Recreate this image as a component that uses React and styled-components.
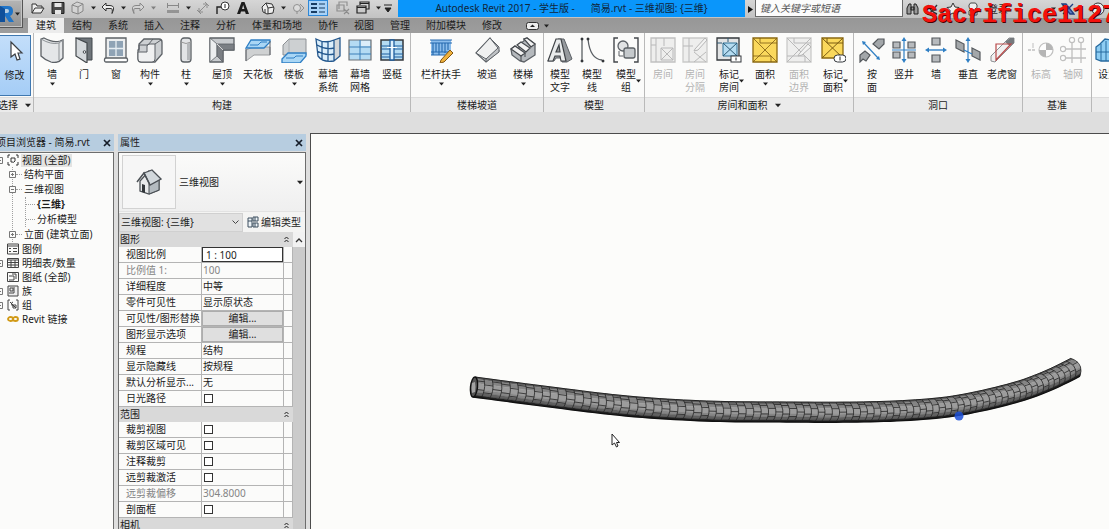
import styled, { createGlobalStyle } from "styled-components";

const GlobalStyle = createGlobalStyle`
    * {
        box-sizing: border-box;
    }

    body {
        margin: 0;
        overflow: hidden;
        background: #dedede;
    }

    body, button, input, select, table {
        font-family: "Noto Sans", "Noto Sans CJK SC", sans-serif;
        font-size: 10px;
        line-height: 13px;
        color: #1c1c1c;
    }

    button {
        border: 0;
        padding: 0;
        background: none;
    }

    svg {
        display: block;
        flex-shrink: 0;
    }

    ul {
        list-style: none;
        margin: 0;
        padding: 0;
    }
`

const Shell = styled.div`
    display: flex;
    flex-direction: column;
    height: 100vh;
    margin-left: -4px;
    overflow: hidden;
    white-space: nowrap;
`

/* ---------- title bar and tabs ---------- */

const TopBar = styled.header`
    position: relative;
    display: grid;
    grid-template-columns: 32px 1fr;
    background: linear-gradient(#d6d6d6, #c2c2c2 18px, #979797 18px, #9d9d9d);
`

const AppButton = styled.button`
    grid-row: span 2;
    display: flex;
    align-items: center;
    justify-content: flex-end;
    gap: 1px;
    height: 28px;
    width: 27px;
    padding-right: 2px;
    border: 1px solid #555;
    border-top: 0;
    background: linear-gradient(#b5b5b5, #8f8f8f);
    box-shadow: inset 0 0 0 1px #c4c4c4;
`

const QuickBar = styled.div`
    display: flex;
    align-items: stretch;
    height: 18px;
`

const QuickButton = styled.button`
    display: flex;
    align-items: center;
    justify-content: center;
    width: ${props => props.$narrow ? 10 : 20}px;
    height: 16px;
    flex-shrink: 0;
    opacity: ${props => props.disabled ? .45 : 1};
    ${props => props.$on && `
        background: #a9d2f7;
        box-shadow: inset 0 0 0 1px #2e88d8;
    `}
`

const QuickGap = styled.span`
    width: 5px;
    flex-shrink: 0;
`

const WindowTitle = styled.h1`
    flex: 1;
    display: flex;
    justify-content: center;
    gap: 16px;
    height: 17px;
    margin: 0;
    background: #0a96fb;
    color: #10263c;
    font-size: 10px;
    font-weight: normal;
    line-height: 16px;
`

const SearchArea = styled.div`
    display: flex;
    align-items: center;
    width: 364px;
    overflow: hidden;
`

const SearchInput = styled.input`
    width: 148px;
    height: 17px;
    margin-bottom: 2px;
    padding: 0 4px;
    border: 1px solid #6a6a6a;
    border-top: 0;
    background: #fcfcfc;

    &::placeholder {
        color: #555;
        font-style: italic;
    }
`

const SignIn = styled.a`
    width: 60px;
    color: #2c2c2c;
    text-decoration: none;
`

const Tabs = styled.nav`
    display: flex;
    align-items: stretch;
    height: 15px;
`

const Tab = styled.button`
    padding: 0 8px;
    line-height: 15px;
    background: ${props => props.$active ? "#ececec" : "none"};
`

const TabToggle = styled.button`
    display: flex;
    align-items: center;
    gap: 5px;
    margin-left: 16px;
`

const Watermark = styled.span`
    position: absolute;
    top: 0;
    right: -8px;
    color: #f5100c;
    font-family: "Liberation Mono", monospace;
    font-size: 25px;
    font-weight: bold;
    line-height: 32px;
    text-shadow: 1px 1px 0 #4a0000;
    pointer-events: none;
`

/* ---------- ribbon ---------- */

const Ribbon = styled.div`
    display: flex;
    height: 79px;
    background: #fbfbfa;
    margin-bottom: 21px;
`

const Panel = styled.section`
    display: flex;
    flex-direction: column;
    flex: ${props => props.$grow ? "1 0 auto" : "none"};
    border-right: 1px solid #b9b9b9;
`

const PanelTools = styled.div`
    display: flex;
    flex: 1;
    padding: 0 ${props => props.$tight ? 0 : 2}px;
`

const PanelName = styled.h2`
    display: flex;
    align-items: center;
    justify-content: center;
    gap: 7px;
    height: 15px;
    margin: 0;
    border-top: 1px solid #dcdcdc;
    background: #ebebeb;
    font-size: 10px;
    font-weight: normal;
`

const Tool = styled.button`
    display: flex;
    flex-direction: column;
    align-items: center;
    width: ${props => props.$width || 32}px;
    padding-top: 4px;
    color: ${props => props.disabled ? "#b3b3b3" : "#1c1c1c"};

    > svg:first-child {
        opacity: ${props => props.disabled ? .6 : 1};
    }
`

const ToolLabel = styled.span`
    display: grid;
    grid-template-columns: ${props => props.$side ? "6px auto 6px" : "auto"};
    align-items: center;
    margin: 5px 0 1px;
    white-space: pre;
`

const ModifyTool = styled(Tool)`
    height: 61px;
    width: 33px;
    margin-top: 2px;
    padding-top: 2px;
    border: 1px solid #3f78b0;
    background: linear-gradient(#c3defa, #a5cdf6);
`

/* ---------- docked palettes ---------- */

const Workspace = styled.main`
    display: flex;
    flex: 1;
    min-height: 0;
    gap: 4px;
`

const Palette = styled.aside`
    display: flex;
    flex-direction: column;
    flex-shrink: 0;
    width: ${props => props.$width}px;
    min-height: 0;
    padding-top: 1px;
`

const PaletteHeader = styled.header`
    display: flex;
    align-items: center;
    justify-content: space-between;
    height: 17px;
    margin-bottom: 1px;
    padding: 0 3px 0 ${props => props.$flush ? 0 : 2}px;
    background: #b7cde0;
`

const PaletteBody = styled.div`
    flex: 1;
    min-height: 0;
    overflow: hidden;
    border: solid #6d6d6d;
    border-width: 1px 1px 0 ${props => props.$boxed ? 1 : 0}px;
    background: #fbfbfa;
`

const Branch = styled.ul`
    margin-left: 16px;
    border-left: 1px dotted #a0a0a0;
`

const Leaves = styled.ul`
    margin-left: 12px;
    border-left: 1px dotted #a0a0a0;
`

const TreeRow = styled.div`
    display: flex;
    align-items: center;
    height: ${props => props.$nested ? 15 : 14}px;
    font-weight: ${props => props.$bold ? "bold" : "normal"};
`

const Expander = styled.button`
    display: flex;
    flex-shrink: 0;
    width: 7px;
    height: 7px;
    margin-left: ${props => props.$nested ? -4 : 0}px;
    margin-right: ${props => props.$nested ? 0 : 4}px;
    background: #fbfbfa;
`

const Dash = styled.span`
    width: ${props => props.$long ? 9 : 6}px;
    margin-right: 1px;
    border-top: 1px dotted #a0a0a0;
`

const TreeText = styled.span`
    padding: 0 1px;
    margin-left: ${props => props.$nested ? 0 : 2}px;
    background: ${props => props.$selected ? "#e3e3e2" : "none"};
`

const TypePicker = styled.button`
    display: flex;
    align-items: center;
    width: 100%;
    height: 59px;
    padding: 2px 2px 2px 3px;
    border-bottom: 1px solid #e2e2e2;
    background: linear-gradient(#fbfbfa, #efefef);
    text-align: left;
`

const Thumb = styled.span`
    display: flex;
    align-items: center;
    justify-content: center;
    width: 54px;
    height: 54px;
    margin-right: 3px;
    border: 1px solid #d2d2d2;
    background: #f6f6f6;
`

const TypeName = styled.span`
    flex: 1;
`

const InstanceBar = styled.div`
    display: flex;
    align-items: center;
    height: 20px;
    background: #f4f4f3;
`

const InstanceSelect = styled.label`
    display: grid;
    grid-template-columns: 1fr 10px;
    align-items: center;
    width: 124px;
    height: 19px;
    border: 1px solid #d0d0d0;
    background: #e1e1e1;
`

const Select = styled.select`
    appearance: none;
    min-width: 0;
    padding: 0 1px;
    border: 0;
    background: none;
`

const EditType = styled.button`
    display: flex;
    align-items: center;
    gap: 2px;
    padding-left: 4px;
`

const GridArea = styled.div`
    display: flex;
    height: 100%;
`

const PropTable = styled.table`
    flex: 1;
    table-layout: fixed;
    border-spacing: 0;
    align-self: flex-start;
    width: 100%;
`

const SectionCell = styled.th`
    height: 15px;
    padding: 0 4px 0 1px;
    background: #d9d9d9;
    font-weight: normal;
    line-height: 15px;
    text-align: left;

    > div {
        display: flex;
        align-items: center;
        justify-content: space-between;
    }
`

const NameCell = styled.th`
    height: 16px;
    padding: 0 0 0 7px;
    overflow: hidden;
    border: solid #b4b4b4;
    border-width: 0 1px 1px 0;
    color: ${props => props.$muted ? "#858585" : "inherit"};
    font-weight: normal;
    line-height: 15px;
    text-align: left;
`

const ValueCell = styled.td`
    height: 16px;
    padding: 0 0 0 ${props => props.$inset || 0}px;
    border: solid #b4b4b4;
    border-width: 0 1px 1px 0;
    color: ${props => props.$muted ? "#858585" : "inherit"};
    line-height: 15px;
`

const ScaleInput = styled.input`
    display: block;
    width: 100%;
    height: 15px;
    padding: 0 3px;
    border: 1px solid #333;
    background: #fff;
`

const CellButton = styled.button`
    display: block;
    width: 100%;
    height: 15px;
    border: 1px solid #adadad;
    background: #dfdfdf;
`

const Check = styled.input`
    appearance: none;
    display: block;
    width: 9px;
    height: 9px;
    margin: 0 0 0 2px;
    border: 1px solid #333;
    background: #fff;
`

const Scrollbar = styled.div`
    width: 12px;
    flex-shrink: 0;
    background: #cbcbcb;
`

const ScrollUp = styled.button`
    display: flex;
    align-items: center;
    justify-content: center;
    width: 12px;
    height: 15px;
    background: #f2f2f2;
`

const Viewport = styled.section`
    flex: 1;
    min-width: 0;
    overflow: hidden;
    border: solid #4c4c4c;
    border-width: 1px 0 0 1px;
    background: #fcfcfa;
`

/* ---------- icons ---------- */

const Caret = ({ size = 4 }) => (
    <svg width={size + 1} height={size} viewBox="0 0 5 4"><path d="M0 .5h5L2.5 3.5z" fill="#222" /></svg>
)

const Close = () => (
    <svg width="8" height="8" viewBox="0 0 8 8"><path d="M1 1l6 6M7 1L1 7" stroke="#151c28" strokeWidth="1.7" /></svg>
)

const Chevrons = () => (
    <svg width="5" height="7" viewBox="0 0 5 7"><path d="M.5 3l2-2 2 2M.5 6l2-2 2 2" fill="none" stroke="#222" /></svg>
)

const G = "#5c6166"
const L = "#e4e6e8"
const B = "#2f7fc4"
const S = "#a9d6f5"

const toolIcons = {
    wall: <>
        <path d="M2 2l3-1q9 5 16 3l3-1v18q-5 6-12 4Q6 23 2 19z" fill={L} stroke={G} strokeWidth="1.300" />
        <path d="M2 2q10 6 18 4l4-3M20 6v17" fill="none" stroke="#8c9195" />
    </>,
    door: <>
        <path d="M5 1h16v22h-6z" fill="#6f757a" stroke="#43484c" />
        <path d="M5 1l11 5v20L5 19z" fill="#d5d9dc" stroke="#43484c" strokeWidth="1.2" />
        <circle cx="13.5" cy="15" r="1.3" fill="#fff" stroke="#43484c" />
    </>,
    window: <>
        <path d="M3 1h20v21H3z" fill="#eceeef" stroke={G} strokeWidth="1.3" />
        <path d="M6 4h14v15H6z" fill="#8fa3b5" />
        <path d="M13 4v15M6 11.500h14" stroke="#e6edf2" strokeWidth="1.3" />
        <rect x="1.500" y="21" width="23" height="4" rx="1.500" fill="#fff" stroke={G} strokeWidth="1.300" />
    </>,
    component: <>
        <path d="M1 13l1-1V7l5-5h15q3 0 3 3v12l-7 8H4q-3 0-3-3z" fill="#cdd0d3" stroke={G} strokeWidth="1.3" />
        <path d="M1 15h9V9q0-2 3-2h5v15q0 3-3 3H4q-3 0-3-3z" fill="#eff0f1" stroke={G} />
        <path d="M2 14V8h9l5-6M18 7l6-4" fill="none" stroke={G} />
    </>,
    column: <>
        <rect x="8" y="1" width="10" height="24" rx="3" fill="#e2e4e6" stroke={G} strokeWidth="1.3" />
        <path d="M8 5q5 3 10 0" fill="none" stroke="#999" />
        <path d="M15.500 6v17" stroke="#b5b8bb" strokeWidth="3" />
    </>,
    roof: <>
        <path d="M1 1h24v12H14v12H1z" fill="#c8cbce" stroke={G} strokeWidth="1.3" />
        <path d="M1 1l7 6v12l-7 6z" fill="#eceeef" stroke={G} strokeWidth=".8" />
        <path d="M8 7h17v6H14v12l-6-6z" fill="#7b7f84" stroke={G} strokeWidth=".8" />
        <path d="M8 7l6 6" stroke="#d8d8d8" />
    </>,
    ceiling: <>
        <path d="M1 13l7-3h17v8H9l-8 6z" fill="#cfd1d2" stroke="#9a9c9e" />
        <path d="M1 11l5-8h19v2l-6 6z" fill={S} stroke={B} strokeWidth="1.3" />
        <path d="M5 8h8l3-3h6" fill="none" stroke={B} />
        <path d="M1 12v12M25 4v14" stroke={G} />
    </>,
    floor: <>
        <path d="M2 8l6-6h17v16H2z" fill="#cdd0d2" stroke="#8c9094" />
        <path d="M8 2v15" stroke="#aaaeb1" />
        <path d="M1 22l6-6h18v3l-6 7H1z" fill={S} stroke={B} strokeWidth="1.3" />
        <path d="M5 21h8l2-2h7" fill="none" stroke={B} />
    </>,
    curtain: <>
        <path d="M1 2q9 5 18 1v21q-10 2-15-4z" fill="#dbeefb" />
        <path d="M19 3l6-2v18l-6 5z" fill="#d4d7d9" />
        <path d="M1 2q9 5 18 1l6-2v18l-6 5Q8 26 3 19zM2 8q8 5 17 3M2 14q8 5 17 3M7 4v18M13 5v19M19 3v21" fill="none" stroke="#24588e" strokeWidth="1.3" />
    </>,
    grid: <>
        <path d="M2 3h22v20H2z" fill="#b4dbf3" stroke="#6d7174" strokeWidth="1.2" />
        <path d="M13 3v20M2 10h22M2 17h22" stroke="#3b7fb8" />
        <path d="M14 4h9v5h-9z" fill="#dceefa" />
    </>,
    mullion: <>
        <path d="M2 3h22v20H2z" fill="#b4dbf3" stroke="#34383c" strokeWidth="1.5" />
        <path d="M2 9h22M2 12h22M2 17h22M2 20h22" stroke="#1f5e9d" strokeWidth="1.2" />
        <path d="M11 3h4v20h-4z" fill="#dff1fd" stroke="#1f5e9d" strokeWidth="1.3" />
        <path d="M8 10.500h10" stroke="#fff" />
    </>,
    railing: <>
        <path d="M3 3h20v15H3z" fill="#8bbdec" />
        <path d="M2 3h22M2 6h22M3 15h19M3 18h14M5 6v12M8 6v9M11 6v12M14 6v9M17 6v10M20 6v7" stroke="#2469ad" strokeWidth="1.1" />
        <path d="M13 23l9-10 3 3-9 9-4 1z" fill="#f0b23c" stroke="#805514" />
    </>,
    ramp: <>
        <path d="M2 16L16 1l9 13-13 11z" fill="#e9eaeb" stroke={G} strokeWidth="1.2" />
        <path d="M16 1l9 9v5L12 25v-3z" fill="#bfc2c5" stroke={G} />
        <path d="M2 16L16 1l8 10-12 11z" fill="#eff0f0" stroke={G} />
    </>,
    stair: <>
        <path d="M1 12l4-3 4 3V7l5-3V2l3-1 8 6v11l-11 7-4-1-8-6z" fill="#b5b9bd" stroke={G} strokeWidth="1.3" />
        <path d="M1 12l4-3 10 7-4 3zM7 8l4-3 9 6-4 4zM14 2l3-1 8 6-4 3z" fill="#f3f3f3" stroke="#45494d" strokeWidth="1.200" />
        <path d="M11 19v5M15 16v4" stroke="#45494d" />
    </>,
    modelText: <>
        <path d="M11 2h6l8 20-5 3h-5l-1-4H9l-2 3H1z" fill="#969a9e" stroke={G} />
        <path d="M9 2h5l5 22h-5l-1-5H8l-2 5H1zM9 15h4l-1-7z" fill="#e9ebec" fillRule="evenodd" stroke="#404448" strokeWidth="1.2" />
    </>,
    modelLine: <>
        <path d="M3 2v22M9 2q2 20 14 21" fill="none" stroke="#5b6065" strokeWidth="1.3" />
        <path d="M2 1h2v2H2zM2 23h2v2H2zM8 1h2v2H8zM23 23h2v2h-2z" fill="#33373b" stroke="#33373b" strokeWidth=".6" />
    </>,
    modelGroup: <>
        <path d="M5 1H1v24h4M21 1h4v24h-4" fill="none" stroke="#44484c" strokeWidth="1.4" />
        <circle cx="10" cy="9" r="5" fill="#e1e3e4" stroke={G} strokeWidth="1.3" />
        <rect x="11" y="11" width="11" height="10" rx="2" fill="#c5c9cc" stroke={G} strokeWidth="1.3" />
        <path d="M6 14v5h4" fill="none" stroke={G} />
    </>,
    room: <>
        <path d="M1 1h24v24H1z" fill="#e6e6e6" stroke="#9c9c9c" strokeWidth="1.3" />
        <path d="M6 1v24M14 1v8M1 8h5M11 11h12v12H11zM11 11l12 12M23 11L11 23" fill="none" stroke="#8e8e8e" />
    </>,
    roomSplit: <>
        <path d="M1 1h24v24H1z" fill="#e6e6e6" stroke="#aaa" strokeWidth="1.3" />
        <path d="M7 1v24M1 9h10M12 15l12 10M24 15L12 25" fill="none" stroke="#8e8e8e" />
        <path d="M13 12L23 1l2 2-9 10-4 1z" fill="#eee" stroke="#888" />
    </>,
    tagRoom: <>
        <path d="M1 1h22v22H1z" fill="#e2e4e5" stroke="#34383c" strokeWidth="1.3" />
        <path d="M7 6h14v13H7z" fill="#b5dcf1" stroke="#2f7299" />
        <path d="M7 6l14 13M21 6L7 19M1 6h5M12 1v4" stroke="#2e5973" />
        <rect x="15" y="19" width="10" height="6" fill="#fff" stroke="#33373b" />
        <path d="M20 20.500v3" stroke="#222" />
    </>,
    area: <>
        <path d="M1 1h24v24H1z" fill="#fad85c" stroke="#8c6912" strokeWidth="1.3" />
        <path d="M1 1l24 24M25 1L1 25M8 1v5h17M1 19h18v6" fill="none" stroke="#7c5c11" strokeWidth=".8" />
    </>,
    areaLine: <>
        <path d="M1 1h24v24H1z" fill="#e6e6e6" stroke="#aaa" strokeWidth="1.3" />
        <path d="M1 1l24 24M25 1L1 25M8 1v5h17M1 19h18v6" fill="none" stroke="#8e8e8e" />
        <path d="M13 17l9-10 3 3-9 8-4 1z" fill="#eee" stroke="#888" />
    </>,
    tagArea: <>
        <path d="M2 1h21v20H2z" fill="#fad85c" stroke="#8c6912" strokeWidth="1.3" />
        <path d="M2 1l21 20M23 1L2 21M7 1v5h16" fill="none" stroke="#7c5c11" />
        <rect x="14" y="18" width="12" height="7" rx="3.500" fill="#fff" stroke="#33373b" />
        <path d="M20 19.500v4" stroke="#222" />
    </>,
    byFace: <>
        <path d="M14 7l5-5h6v5l-5 5zM1 25v-7l5-4 5 4-4 6-3-2z" fill="#a3a7aa" stroke="#54585c" strokeWidth="1.2" />
        <path d="M5 6l14 15" stroke={B} strokeWidth="1.2" />
        <path d="M3 4l4 1-3 3zM21 23l-4-1 3-3z" fill={B} />
    </>,
    shaft: <>
        <path d="M2 5h7v6H2zM17 5h7v6h-7zM2 15h7v6H2zM17 15h7v6h-7z" fill="#b7babd" stroke="#55595d" strokeWidth="1.2" />
        <path d="M13 2v22M1 13h24" stroke={B} strokeWidth="1.2" />
        <path d="M10.500 4L13 0l2.500 4zM10.500 22L13 26l2.500-4z" fill={B} />
    </>,
    wallOpening: <>
        <path d="M9 1h8v7H9zM9 18h8v7H9z" fill="#b7babd" stroke="#55595d" strokeWidth="1.2" />
        <path d="M4 13h18" stroke={B} strokeWidth="1.4" />
        <path d="M2 13l4-2.500v5zM24 13l-4-2.500v5z" fill={B} />
    </>,
    vertical: <>
        <path d="M1 3l8 4v8l-8-4zM17 11l8 4v8l-8-4z" fill="#a3a7aa" stroke="#55595d" strokeWidth="1.2" />
        <path d="M13 3v21M9 13l8 4" stroke={B} strokeWidth="1.2" />
        <path d="M10.500 4L13 0l2.500 4zM10.500 22L13 26l2.500-4z" fill={B} />
    </>,
    dormer: <>
        <path d="M2 24v-5L20 1h5v5L6 25z" fill="#f1f1f1" stroke="#8c8f92" />
        <path d="M16 5l5-4h4v5l-4 3z" fill="#75797d" />
        <path d="M7 24V7h15L7 23" fill="none" stroke="#b74848" strokeWidth="1.2" />
    </>,
    level: <>
        <path d="M0 13h8" stroke="#999" strokeDasharray="3 1" strokeWidth="1.3" />
        <path d="M5 6v5" stroke="#999" />
        <circle cx="18" cy="13" r="7" fill="#fff" stroke="#999" strokeWidth="1.2" />
        <path d="M18 6a7 7 0 0 1 7 7h-7zM18 20a7 7 0 0 1-7-7h7z" fill="#888" />
    </>,
    axis: <>
        <path d="M12 6v20M21 6v20M6 12h20M6 21h20" stroke="#999" strokeWidth="1.3" />
        <g fill="#fff" stroke="#999" strokeWidth="1.2"><circle cx="12" cy="3" r="2.600" /><circle cx="21" cy="3" r="2.600" /><circle cx="3" cy="12" r="2.600" /><circle cx="3" cy="21" r="2.600" /></g>
    </>,
    workplane: <>
        <path d="M1 10l4-3 5-5 15 2v14l-6 6H6l-5-2z" fill="#8ecdf3" stroke="#276a9f" strokeWidth="1.3" />
        <path d="M6 7v17M11 4v20M1 15h20" stroke="#276a9f" />
    </>,
    modify: <path d="M9 4v15l4-3 2 6 3-1-2-6h4z" fill="#fff" stroke="#3c3f43" strokeWidth="1.2" />
}

const ToolIcon = ({ name }) => (
    <svg width="26" height="26" viewBox="0 0 26 26">{toolIcons[name]}</svg>
)

const quickIcons = {
    open: <path d="M1 12V3h4l1 2h5v2M1 12l3-5h9l-3 5z" fill="#eee" stroke="#333" />,
    save: <><path d="M1 1.500h12v11H1z" fill="#4b4b4b" stroke="#222" /><path d="M3.500 2h7v4h-7zM4 9h6v4H4z" fill="#e6e6e6" /></>,
    cube: <path d="M1 4l5-3 6 2v7l-5 3-6-2zM1 4l6 2 5-3M7 6v7" fill="#ddd" stroke="#333" />,
    undo: <path d="M5 2L1 6l4 4V7.500h5q2 0 1 5 4-8-2-8H5z" fill="#eee" stroke="#333" />,
    redo: <path d="M9 2l4 4-4 4V7.500H4q-2 0-1 5-4-8 2-8h4z" fill="#ddd" stroke="#333" />,
    measure: <><path d="M1.500 2v5M12.500 2v5M1 4.500h12" stroke="#333" /><path d="M1 9h12v3H1z" fill="#555" /></>,
    dimension: <path d="M3 11l8-8M1 9l4 4M9 1l4 4M3 11V7M3 11h4M11 3H7M11 3v4" fill="none" stroke="#444" />,
    tag: <><path d="M1 13V6h4" fill="none" stroke="#222" strokeWidth="1.4" /><circle cx="9" cy="5" r="4" fill="#fff" stroke="#333" /><path d="M9 3v4" stroke="#222" /></>,
    text: <path d="M1 13L5.500 1h3L13 13h-3.200l-.8-2.500H5L4.200 13zM6 8h2.400L7.200 4z" fill="#1c1c1c" fillRule="evenodd" />,
    house: <><path d="M1 6l4-4 6 1 2 4-1 5-6 1-4-2z" fill="#eee" stroke="#333" /><path d="M1 6l4-4 2 5v6M7 7l6-1M4 8v4" fill="none" stroke="#333" /></>,
    section: <><circle cx="6" cy="7" r="3.500" fill="#eee" stroke="#444" /><path d="M9 3l4 4-4 4M6 11v2" fill="none" stroke="#444" /></>,
    thin: <><path d="M0 3h6M0 7h6M0 11h6" stroke="#173c63" strokeWidth="2" /><path d="M8 3h6M8 7h6M8 11h6" stroke="#173c63" /></>,
    hidden: <path d="M3 8V1h8v4M1 4h7v6H1zM8 8l5 5M13 8l-5 5" fill="none" stroke="#444" strokeWidth="1.200" />,
    switch: <path d="M4 4V1h9v7h-3M4 2.500h9M1 5h9v7H1zM1 6.500h9" fill="none" stroke="#222" strokeWidth="1.200" />,
    custom: <path d="M3 4h8M4 7h6l-3 4z" fill="#222" stroke="#222" />,
    play: <path d="M5 4l5 3.500L5 11z" fill="#111" />,
    find: <path d="M1 12V6l2-4h2v10zM8 12V2h2l2 4v6zM5 5h3v3H5z" fill="#999" stroke="#222" />,
    comm: <path d="M2 3q2 6 9 9M11 3L4 11M3 12h8" fill="none" stroke="#333" strokeWidth="1.400" />,
    star: <path d="M7 1l2 4 4 .5-3 3 1 4.500-4-2-4 2 1-4.500-3-3L5 5z" fill="#eee" stroke="#333" />,
    user: <path d="M7 1a3 3 0 0 1 2 6l2 2v4H3V9l2-2a3 3 0 0 1 2-6z" fill="#eee" stroke="#444" />,
    exchange: <path d="M1 2l4 0 8 10H9zM12 2L2 12" fill="#5b7fc4" stroke="#203f80" strokeWidth="1.400" />,
    help: <><circle cx="7" cy="7" r="6" fill="#eee" stroke="#333" /><path d="M5 5q2-3 4 0 0 1-2 3M7 10v1" fill="none" stroke="#333" /></>
}

const QuickIcon = ({ name }) => (
    <svg width="14" height="14" viewBox="0 0 14 14">{quickIcons[name]}</svg>
)

const treeIcons = {
    views: <path d="M1 4V1h2M9 1h2v3M11 8v3H9M3 11H1V8M4 4h4v3q-1 2-3 1H4z" fill="none" stroke="#333" />,
    legend: <path d="M.5 1h11v10H.5zM1 3h10M2 5.500h2M6 5.500h4M2 8.500h2M6 8.500h4" fill="none" stroke="#444" />,
    schedule: <path d="M.5 1.500h11v9H.5zM1 3h10M1 5.500h10M1 8h10M4 3v7M8 3v7" fill="none" stroke="#444" />,
    sheet: <path d="M.5 1.500h11v9H.5zM2 5h5v4H2M5 3h4v5" fill="none" stroke="#444" />,
    family: <path d="M1 1h10v10H1zM3 3h3v3H3zM7 2v6H2" fill="#eee" stroke="#444" />,
    group: <path d="M3 1H1v10h2M9 1h2v10H9M6 3a2 2 0 1 0 1 4M6 6h3v3H6zM3 3l6 6" fill="none" stroke="#444" />,
    link: <g fill="none" stroke="#d19a17" strokeWidth="1.800"><ellipse cx="3.500" cy="6" rx="2.500" ry="2" /><ellipse cx="8.500" cy="6" rx="2.500" ry="2" /></g>
}

/* ---------- data ---------- */

const tabs = ["建筑", "结构", "系统", "插入", "注释", "分析", "体量和场地", "协作", "视图", "管理", "附加模块", "修改"]

const quickItems = [
    { icon: "open" }, { icon: "save" }, { icon: "cube", off: true }, { caret: true },
    { icon: "undo" }, { caret: true }, { icon: "redo", off: true }, { caret: true, off: true }, { gap: true },
    { icon: "measure", off: true }, { caret: true }, { icon: "dimension", off: true }, { icon: "tag" }, { icon: "text" }, { gap: true },
    { icon: "house" }, { caret: true }, { icon: "section", off: true }, { icon: "thin", on: true }, { gap: true },
    { icon: "hidden", off: true }, { icon: "switch" }, { caret: true }, { icon: "custom", narrow: true }, { gap: true }
]

const panels = [
    {
        name: "构建",
        tools: [
            { icon: "wall", label: "墙", menu: true },
            { icon: "door", label: "门" },
            { icon: "window", label: "窗" },
            { icon: "component", label: "构件", menu: true, width: 36 },
            { icon: "column", label: "柱", menu: true, width: 36 },
            { icon: "roof", label: "屋顶", menu: true, width: 36 },
            { icon: "ceiling", label: "天花板", width: 36 },
            { icon: "floor", label: "楼板", menu: true, width: 36 },
            { icon: "curtain", label: "幕墙\n系统" },
            { icon: "grid", label: "幕墙\n网格" },
            { icon: "mullion", label: "竖梃" }
        ]
    },
    {
        name: "楼梯坡道",
        tools: [
            { icon: "railing", label: "栏杆扶手", menu: true, width: 56 },
            { icon: "ramp", label: "坡道", width: 36 },
            { icon: "stair", label: "楼梯", menu: true, width: 36 }
        ]
    },
    {
        name: "模型",
        tight: true,
        tools: [
            { icon: "modelText", label: "模型\n文字" },
            { icon: "modelLine", label: "模型\n线" },
            { icon: "modelGroup", label: "模型\n组", side: true, width: 36 }
        ]
    },
    {
        name: "房间和面积",
        menu: true,
        tools: [
            { icon: "room", label: "房间", off: true },
            { icon: "roomSplit", label: "房间\n分隔", off: true },
            { icon: "tagRoom", label: "标记\n房间", side: true, width: 36 },
            { icon: "area", label: "面积", menu: true, width: 36 },
            { icon: "areaLine", label: "面积\n边界", off: true },
            { icon: "tagArea", label: "标记\n面积", side: true, width: 36 }
        ]
    },
    {
        name: "洞口",
        tools: [
            { icon: "byFace", label: "按\n面" },
            { icon: "shaft", label: "竖井" },
            { icon: "wallOpening", label: "墙" },
            { icon: "vertical", label: "垂直" },
            { icon: "dormer", label: "老虎窗", width: 36 }
        ]
    },
    {
        name: "基准",
        tools: [
            { icon: "level", label: "标高", off: true },
            { icon: "axis", label: "轴网", off: true }
        ]
    },
    { name: "", grow: true, tight: true, tools: [{ icon: "workplane", label: "设置" }] }
]

const properties = [
    { section: "图形" },
    { name: "视图比例", kind: "scale", value: "1 : 100" },
    { name: "比例值 1:", value: "100", muted: true },
    { name: "详细程度", value: "中等" },
    { name: "零件可见性", value: "显示原状态" },
    { name: "可见性/图形替换", kind: "button", value: "编辑..." },
    { name: "图形显示选项", kind: "button", value: "编辑..." },
    { name: "规程", value: "结构" },
    { name: "显示隐藏线", value: "按规程" },
    { name: "默认分析显示...", value: "无" },
    { name: "日光路径", kind: "check" },
    { section: "范围" },
    { name: "裁剪视图", kind: "check" },
    { name: "裁剪区域可见", kind: "check" },
    { name: "注释裁剪", kind: "check" },
    { name: "远剪裁激活", kind: "check" },
    { name: "远剪裁偏移", value: "304.8000", muted: true },
    { name: "剖面框", kind: "check" },
    { section: "相机" }
]

/* ---------- tunnel model ---------- */

const axisPoints = [
    [163, 253], [232, 262], [316, 272], [396, 277], [479, 278], [545, 278],
    [602, 276], [649, 271], [702, 259], [736, 247], [767, 232]
]

// Catmull-Rom through the axis points, then resampled ring by ring
const sampleAxis = () => {
    const fine = []
    for (let i = 0; i < axisPoints.length - 1; i++) {
        const a = axisPoints[Math.max(i - 1, 0)]
        const b = axisPoints[i]
        const c = axisPoints[i + 1]
        const d = axisPoints[Math.min(i + 2, axisPoints.length - 1)]
        for (let s = 0; s < 80; s++) {
            const t = s / 80
            fine.push([0, 1].map(k => .5 * (2 * b[k] + (c[k] - a[k]) * t
                + (2 * a[k] - 5 * b[k] + 4 * c[k] - d[k]) * t * t
                + (3 * b[k] - a[k] - 3 * c[k] + d[k]) * t * t * t)))
        }
    }
    const rings = []
    let run = 99
    for (let i = 1; i < fine.length; i++) {
        const dx = fine[i][0] - fine[i - 1][0]
        const dy = fine[i][1] - fine[i - 1][1]
        const len = Math.hypot(dx, dy)
        run += len
        const pitch = 8 - 2.5 * (fine[i][0] - 163) / 603
        if (run >= pitch) {
            run = 0
            rings.push({ x: fine[i][0], y: fine[i][1], tx: dx / len, ty: dy / len })
        }
    }
    return rings
}

const rings = sampleAxis()
const bulge = ring => 2 + 3 * (ring.x - 163) / 603

// v runs from -1 (top edge) to 1 (bottom edge) across the tube
const at = (ring, v) => {
    const u = bulge(ring) * (1 - v * v)
    const x = ring.x + ring.tx * u - ring.ty * v * 10
    const y = ring.y + ring.ty * u + ring.tx * v * 10
    return x.toFixed(1) + " " + y.toFixed(1)
}

const bands = [
    [-1, -.8, "#5c5c5c"], [-.8, -.4, "#848484"], [-.4, .2, "#9c9c9c"],
    [.2, .5, "#868686"], [.5, .8, "#606060"], [.8, 1, "#242424"]
]

const Tunnel = () => (
    <g>
        {bands.map(([from, to, fill]) => (
            <path
                key={fill}
                d={"M" + rings.map(r => at(r, from)).join("L") + "L" + [...rings].reverse().map(r => at(r, to)).join("L") + "Z"}
                fill={fill}
                stroke={fill}
                strokeWidth=".4"
            />
        ))}
        {rings.map((r, i) => {
            const next = rings[i + 1]
            const joints = [[-.65, .2], [-.35, .45], [-.75, 0]][i % 3]
            return (
                <g key={i} fill="none" stroke="#262626" strokeWidth=".8">
                    <path d={"M" + [-1, -.6, -.2, .2, .6, 1].map(v => at(r, v)).join("L")} />
                    {next && joints.map(v => <path key={v} d={"M" + at(r, v) + "L" + at(next, v)} />)}
                </g>
            )
        })}
        <path d={"M" + rings.map(r => at(r, -1)).join("L")} fill="none" stroke="#222" />
        <path d={"M" + rings.map(r => at(r, 1)).join("L")} fill="none" stroke="#111" strokeWidth="1.4" />
        <ellipse cx="163" cy="253" rx="3.500" ry="10" transform="rotate(6 163 253)" fill="#555" stroke="#111" strokeWidth="1.4" />
        <path d="M161 249q-1 5 0 10l3-1q1-5 0-10z" fill="#a2a2a2" />
    </g>
)

/* ---------- components ---------- */

const RibbonTool = ({ icon, label, width, menu, side, off }) => (
    <Tool $width={width} disabled={off}>
        <ToolIcon name={icon} />
        <ToolLabel $side={side}>
            {side && <span />}
            <span>{label}</span>
            {side && <Caret size={4} />}
        </ToolLabel>
        {menu && <Caret size={4} />}
    </Tool>
)

const SignIcon = ({ sign }) => (
    <svg width="7" height="7" viewBox="0 0 7 7">
        <path d={sign === "+" ? "M.5.5h6v6h-6zM2 3.500h3M3.500 2v3" : "M.5.5h6v6h-6zM2 3.500h3"} fill="none" stroke="#777" />
    </svg>
)

const TreeItem = ({ icon, text, sign, selected }) => (
    <TreeRow>
        <Expander aria-label={text}>{sign && <SignIcon sign={sign} />}</Expander>
        <svg width="12" height="12" viewBox="0 0 12 12">{treeIcons[icon]}</svg>
        <TreeText $selected={selected}>{text}</TreeText>
    </TreeRow>
)

const BranchItem = ({ text, sign, children }) => (
    <li>
        <TreeRow $nested>
            <Expander $nested aria-label={text}><SignIcon sign={sign} /></Expander>
            <Dash />
            <TreeText $nested>{text}</TreeText>
        </TreeRow>
        {children}
    </li>
)

const PropertyValue = ({ id, row }) => {
    if (row.kind === "scale") return <ScaleInput id={id} defaultValue={row.value} />
    if (row.kind === "button") return <CellButton id={id}>{row.value}</CellButton>
    if (row.kind === "check") return <Check id={id} type="checkbox" />
    return row.value
}

const PropertyRow = ({ row, id }) => {
    if (row.section) {
        return (
            <tr>
                <SectionCell colSpan={3}>
                    <div>{row.section}<button aria-label={row.section}><Chevrons /></button></div>
                </SectionCell>
            </tr>
        )
    }
    return (
        <tr>
            <NameCell scope="row" $muted={row.muted}>
                {row.kind ? <label htmlFor={id}>{row.name}</label> : row.name}
            </NameCell>
            <ValueCell $muted={row.muted} $inset={row.kind ? 0 : 1}><PropertyValue id={id} row={row} /></ValueCell>
            <ValueCell />
        </tr>
    )
}

const App = () => {
    return (
        <>
            <GlobalStyle />
            <Shell>
                <TopBar>
                    <AppButton aria-label="Revit">
                        <svg width="15" height="18" viewBox="0 0 15 18">
                            <path d="M1 1h8q5 0 5 5 0 4-3 5l4 6h-5l-4-6v6H1z" fill="#1f74c8" />
                            <path d="M6 4h2q2 0 2 2t-2 2H6z" fill="#b4cce2" />
                            <path d="M1 1l5 3v13H1z" fill="#0f4f9a" />
                        </svg>
                        <Caret size={4} />
                    </AppButton>
                    <QuickBar>
                        {quickItems.map((item, i) => item.gap ? <QuickGap key={i} /> : (
                            <QuickButton key={i} $narrow={item.caret || item.narrow} $on={item.on} disabled={item.off}>
                                {item.caret ? <Caret size={4} /> : <QuickIcon name={item.icon} />}
                            </QuickButton>
                        ))}
                        <WindowTitle>
                            <span>Autodesk Revit 2017 - 学生版 -</span>
                            <span>简易.rvt - 三维视图: {"{三维}"}</span>
                        </WindowTitle>
                        <SearchArea>
                            <QuickButton $narrow aria-label="搜索"><QuickIcon name="play" /></QuickButton>
                            <SearchInput aria-label="搜索" placeholder="键入关键字或短语" />
                            {["find", "comm", "star", "user"].map(name => (
                                <QuickButton key={name}><QuickIcon name={name} /></QuickButton>
                            ))}
                            <QuickGap />
                            <SignIn href="#">登录</SignIn>
                            <QuickButton $narrow><Caret size={4} /></QuickButton>
                            <QuickButton><QuickIcon name="exchange" /></QuickButton>
                            <QuickGap />
                            <QuickGap />
                            <QuickButton><QuickIcon name="help" /></QuickButton>
                        </SearchArea>
                    </QuickBar>
                    <Tabs>
                        {tabs.map((tab, i) => <Tab key={tab} $active={i === 0}>{tab}</Tab>)}
                        <TabToggle aria-label="最小化">
                            <svg width="13" height="8" viewBox="0 0 13 8">
                                <rect x=".5" y=".5" width="12" height="7" rx="2" fill="#eee" stroke="#333" />
                                <path d="M4 5h5L6.500 2.500z" fill="#222" />
                            </svg>
                            <Caret size={4} />
                        </TabToggle>
                    </Tabs>
                    <Watermark>Sacrifice1127</Watermark>
                </TopBar>

                <Ribbon>
                    <Panel>
                        <PanelTools>
                            <ModifyTool>
                                <ToolIcon name="modify" />
                                <ToolLabel>修改</ToolLabel>
                            </ModifyTool>
                        </PanelTools>
                        <PanelName>选择 <Caret size={5} /></PanelName>
                    </Panel>
                    {panels.map(panel => (
                        <Panel key={panel.name} $grow={panel.grow}>
                            <PanelTools $tight={panel.tight}>
                                {panel.tools.map(tool => <RibbonTool key={tool.icon} {...tool} />)}
                            </PanelTools>
                            <PanelName>{panel.name}{panel.menu && <Caret size={5} />}</PanelName>
                        </Panel>
                    ))}
                </Ribbon>

                <Workspace>
                    <Palette $width={118}>
                        <PaletteHeader $flush>
                            项目浏览器 - 简易.rvt
                            <button aria-label="关闭"><Close /></button>
                        </PaletteHeader>
                        <PaletteBody>
                            <ul>
                                <li>
                                    <TreeItem icon="views" text="视图 (全部)" sign="-" selected />
                                    <Branch>
                                        <BranchItem text="结构平面" sign="+" />
                                        <BranchItem text="三维视图" sign="-">
                                            <Leaves>
                                                <li><TreeRow $nested $bold><Dash $long /><TreeText $nested>{"{三维}"}</TreeText></TreeRow></li>
                                                <li><TreeRow $nested><Dash $long /><TreeText $nested>分析模型</TreeText></TreeRow></li>
                                            </Leaves>
                                        </BranchItem>
                                        <BranchItem text="立面 (建筑立面)" sign="+" />
                                    </Branch>
                                </li>
                                <li><TreeItem icon="legend" text="图例" /></li>
                                <li><TreeItem icon="schedule" text="明细表/数量" sign="+" /></li>
                                <li><TreeItem icon="sheet" text="图纸 (全部)" /></li>
                                <li><TreeItem icon="family" text="族" sign="+" /></li>
                                <li><TreeItem icon="group" text="组" sign="+" /></li>
                                <li><TreeItem icon="link" text="Revit 链接" /></li>
                            </ul>
                        </PaletteBody>
                    </Palette>

                    <Palette $width={188}>
                        <PaletteHeader>
                            属性
                            <button aria-label="关闭"><Close /></button>
                        </PaletteHeader>
                        <PaletteBody $boxed>
                            <TypePicker>
                                <Thumb>
                                    <svg width="26" height="26" viewBox="0 0 26 26">
                                        <path d="M4 12v10l9 3 10-4V11L13 2z" fill="#e8eaeb" stroke="#4b5055" strokeWidth="1.300" />
                                        <path d="M13 15v10l10-4V11z" fill="#b4bbc0" stroke="#4b5055" />
                                        <path d="M8 4l8-3 9 9-11 6z" fill="#d2d8dc" stroke="#4b5055" strokeWidth="1.300" />
                                        <path d="M1 13l7-9 6 12" fill="none" stroke="#4b5055" strokeWidth="1.500" />
                                        <path d="M6 15l3 1v8l-3-1z" fill="#33373b" />
                                    </svg>
                                </Thumb>
                                <TypeName>三维视图</TypeName>
                                <Caret size={5} />
                            </TypePicker>
                            <InstanceBar>
                                <InstanceSelect>
                                    <Select aria-label="实例"><option>三维视图: {"{三维}"}</option></Select>
                                    <svg width="7" height="5" viewBox="0 0 7 5"><path d="M.5.5l3 3 3-3" fill="none" stroke="#444" /></svg>
                                </InstanceSelect>
                                <EditType>
                                    <svg width="12" height="12" viewBox="0 0 12 12">
                                        <path d="M1 2h4v9H1zM6 1h5v4H6zM6 7h5v4H6zM1 5h4M8 1v4M8 7v4" fill="#eef4f8" stroke="#3c4f5f" />
                                    </svg>
                                    编辑类型
                                </EditType>
                            </InstanceBar>
                            <GridArea>
                                <PropTable>
                                    <colgroup>
                                        <col width="83" />
                                        <col width="82" />
                                        <col width="9" />
                                    </colgroup>
                                    <tbody>
                                        {properties.map((row, i) => <PropertyRow key={i} row={row} id={"prop-" + i} />)}
                                    </tbody>
                                </PropTable>
                                <Scrollbar>
                                    <ScrollUp aria-label="向上">
                                        <svg width="8" height="6" viewBox="0 0 8 6"><path d="M1 5l3-3 3 3" fill="none" stroke="#333" strokeWidth="1.300" /></svg>
                                    </ScrollUp>
                                </Scrollbar>
                            </GridArea>
                        </PaletteBody>
                    </Palette>

                    <Viewport>
                        <svg width="798" height="395" viewBox="0 0 798 395">
                            <Tunnel />
                            <circle cx="648" cy="282" r="4.500" fill="#1c50d8" opacity=".85" />
                            <path d="M301 300v11l2.500-2 2 4 1.500-1-1.500-3.500h3z" fill="#fff" stroke="#222" />
                        </svg>
                    </Viewport>
                </Workspace>
            </Shell>
        </>
    )
}

export default App;
